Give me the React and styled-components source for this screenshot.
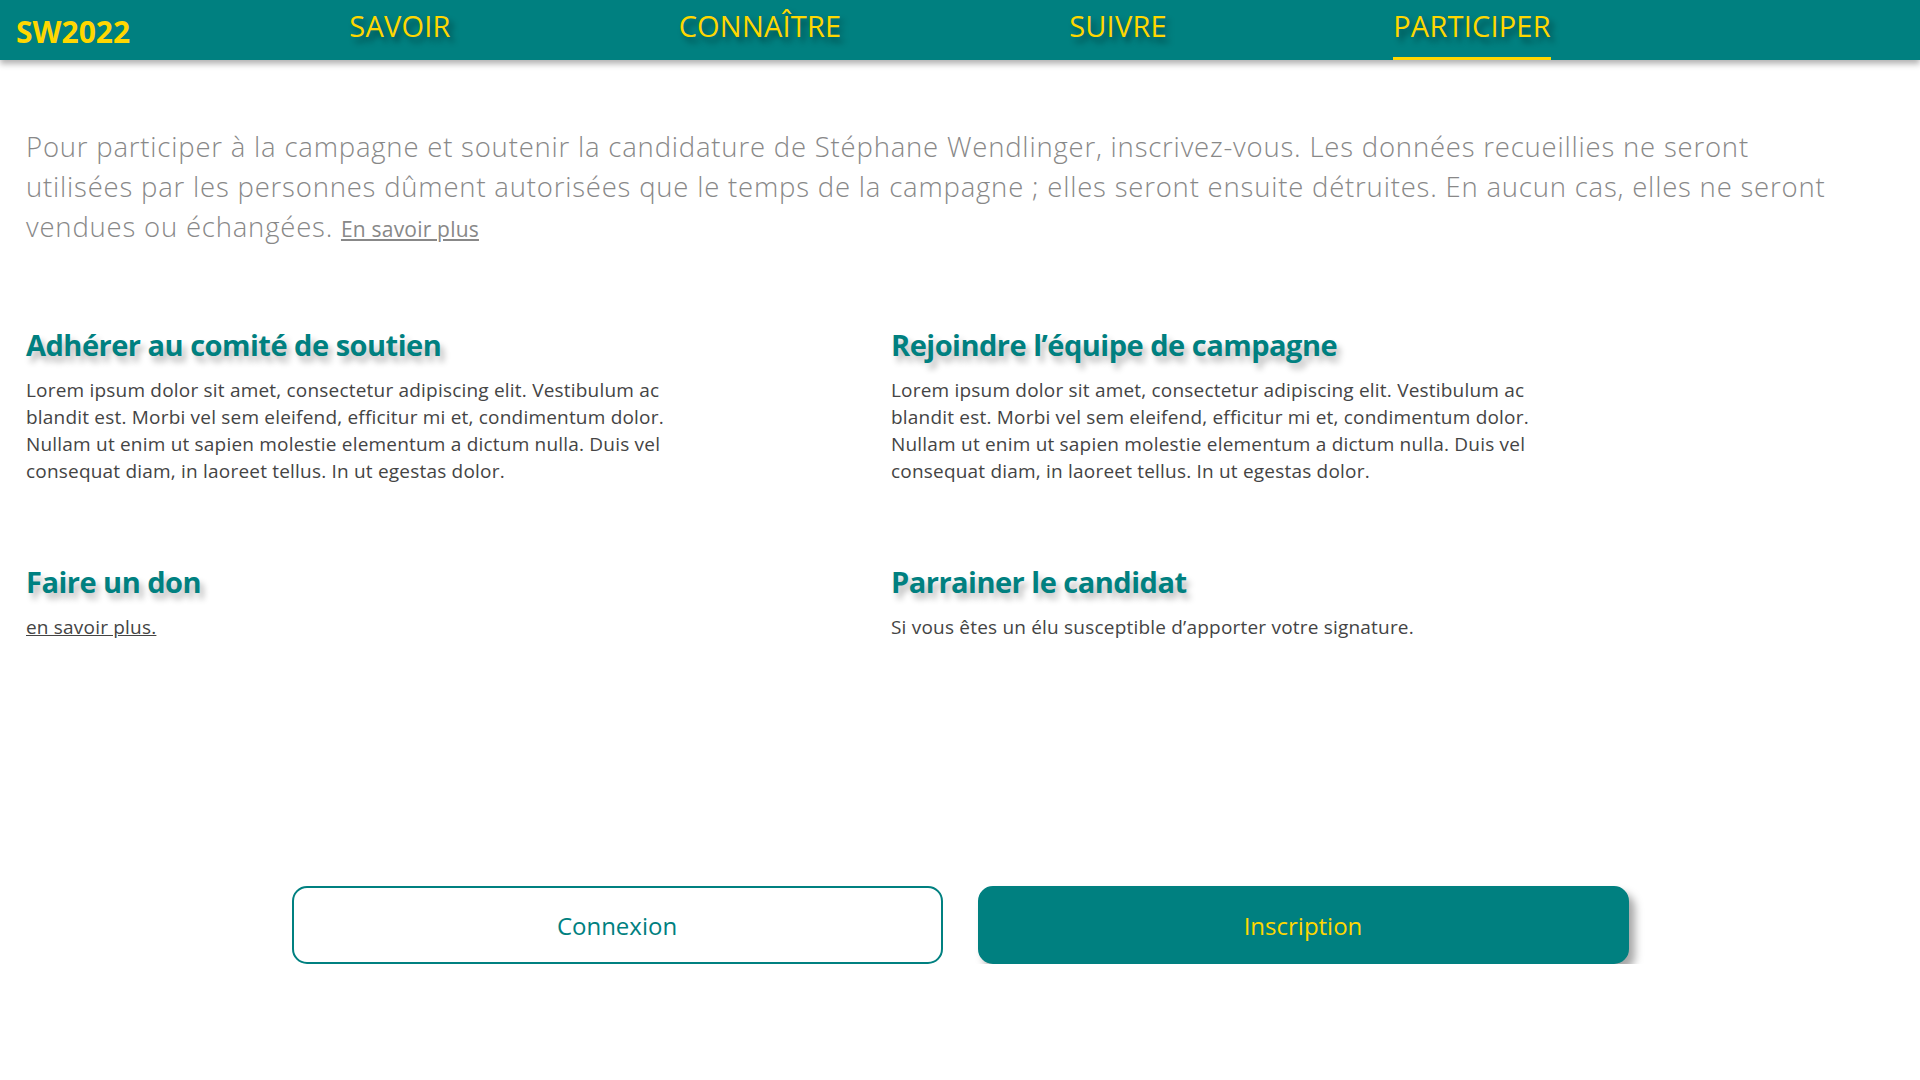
import styled, { createGlobalStyle } from 'styled-components';

const GlobalStyle = createGlobalStyle`
    body {
        margin: 0;
        background: #ffffff;
        font-family: 'Open Sans', 'Noto Sans', sans-serif;
    }
`

const NAV_ITEMS = ['SAVOIR', 'CONNAÎTRE', 'SUIVRE', 'PARTICIPER'];

const SECTIONS = [
    {
        title: 'Adhérer au comité de soutien',
        text: 'Lorem ipsum dolor sit amet, consectetur adipiscing elit. Vestibulum ac blandit est. Morbi vel sem eleifend, efficitur mi et, condimentum dolor. Nullam ut enim ut sapien molestie elementum a dictum nulla. Duis vel consequat diam, in laoreet tellus. In ut egestas dolor.'
    },
    {
        title: 'Rejoindre l’équipe de campagne',
        text: 'Lorem ipsum dolor sit amet, consectetur adipiscing elit. Vestibulum ac blandit est. Morbi vel sem eleifend, efficitur mi et, condimentum dolor. Nullam ut enim ut sapien molestie elementum a dictum nulla. Duis vel consequat diam, in laoreet tellus. In ut egestas dolor.'
    },
    { title: 'Faire un don', link: 'en savoir plus.' },
    { title: 'Parrainer le candidat', text: 'Si vous êtes un élu susceptible d’apporter votre signature.' }
];

function App() {
    return (
        <>
            <GlobalStyle />
            <NavBar>
                <Logo>SW2022</Logo>
                <NavList>
                    {NAV_ITEMS.map((item) => (
                        <NavItem key={item} active={item === 'PARTICIPER'}>
                            <span>{item}</span>
                        </NavItem>
                    ))}
                </NavList>
            </NavBar>
            <Main>
                <Intro>
                    Pour participer à la campagne et soutenir la candidature de Stéphane Wendlinger, inscrivez-vous. Les données recueillies ne seront utilisées par les personnes dûment autorisées que le temps de la campagne ; elles seront ensuite détruites. En aucun cas, elles ne seront vendues ou échangées. <IntroLink href="#">En savoir plus</IntroLink>
                </Intro>
                <SectionGrid>
                    {SECTIONS.map((section) => (
                        <Section key={section.title}>
                            <SectionTitle>{section.title}</SectionTitle>
                            {section.text ? <SectionText>{section.text}</SectionText> : ''}
                            {section.link ? <SectionLink href="#">{section.link}</SectionLink> : ''}
                        </Section>
                    ))}
                </SectionGrid>
                <Actions>
                    <ActionButton>Connexion</ActionButton>
                    <ActionButton primary>Inscription</ActionButton>
                </Actions>
            </Main>
        </>
    )
}

export default App;

const NavBar = styled.header`
    display: flex;
    align-items: stretch;
    height: 60px;
    background: #008080;
    box-shadow: 0 4px 6px rgba(0, 0, 0, 0.3);
    position: relative;
    z-index: 1;
`

const Logo = styled.div`
    width: 220px;
    padding-left: 16px;
    box-sizing: border-box;
    display: flex;
    align-items: center;
    padding-top: 2px;
    color: #ffd700;
    font-size: 30px;
    font-weight: 700;
    letter-spacing: 0;
`

const NavList = styled.nav`
    display: grid;
    grid-template-columns: 360px 360px 356px 352px;
`

const NavItem = styled.div`
    display: flex;
    justify-content: center;
    span {
        display: flex;
        align-items: center;
        height: 100%;
        box-sizing: border-box;
        padding-bottom: 6px;
        color: #ffd700;
        font-size: 29px;
        font-weight: 500;
        letter-spacing: 0.2px;
        text-shadow: 4px 5px 6px rgba(0, 0, 0, 0.45);
        border-bottom: 3px solid ${(props) => props.active ? '#ffd700' : 'transparent'};
    }
`

const Main = styled.main`
    padding: 0 26px;
`

const Intro = styled.p`
    margin: 67px 0 0;
    max-width: 1820px;
    color: #888888;
    font-size: 27.5px;
    font-weight: 300;
    line-height: 40px;
    letter-spacing: 0.8px;
`

const IntroLink = styled.a`
    color: #888888;
    font-size: 21px;
    font-weight: 400;
    letter-spacing: 0.2px;
`

const SectionGrid = styled.div`
    display: grid;
    grid-template-columns: 865px 1fr;
    grid-auto-rows: 237px;
    margin-top: 76px;
`

const Section = styled.section`
    display: flex;
    flex-direction: column;
    align-items: flex-start;
`

const SectionTitle = styled.h2`
    margin: 0 0 12px;
    color: #008080;
    font-size: 29px;
    font-weight: 700;
    line-height: 40px;
    letter-spacing: -0.5px;
    text-shadow: 4px 6px 6px rgba(0, 0, 0, 0.28);
`

const SectionText = styled.p`
    margin: 0;
    max-width: 665px;
    color: #444444;
    font-size: 19px;
    line-height: 27px;
    letter-spacing: 0.2px;
`

const SectionLink = styled.a`
    color: #444444;
    font-size: 19px;
    line-height: 27px;
    letter-spacing: 0.2px;
`

const Actions = styled.div`
    display: flex;
    justify-content: center;
    gap: 35px;
    margin-top: 87px;
`

const ActionButton = styled.button`
    width: 651px;
    height: 78px;
    border-radius: 15px;
    border: 2px solid #008080;
    background: ${(props) => props.primary ? '#008080' : '#ffffff'};
    color: ${(props) => props.primary ? '#ffd700' : '#008080'};
    box-shadow: ${(props) => props.primary ? '6px 7px 8px rgba(0, 0, 0, 0.35)' : 'none'};
    font-family: 'Open Sans', 'Noto Sans', sans-serif;
    font-size: 24px;
    font-weight: 500;
    cursor: pointer;
`
